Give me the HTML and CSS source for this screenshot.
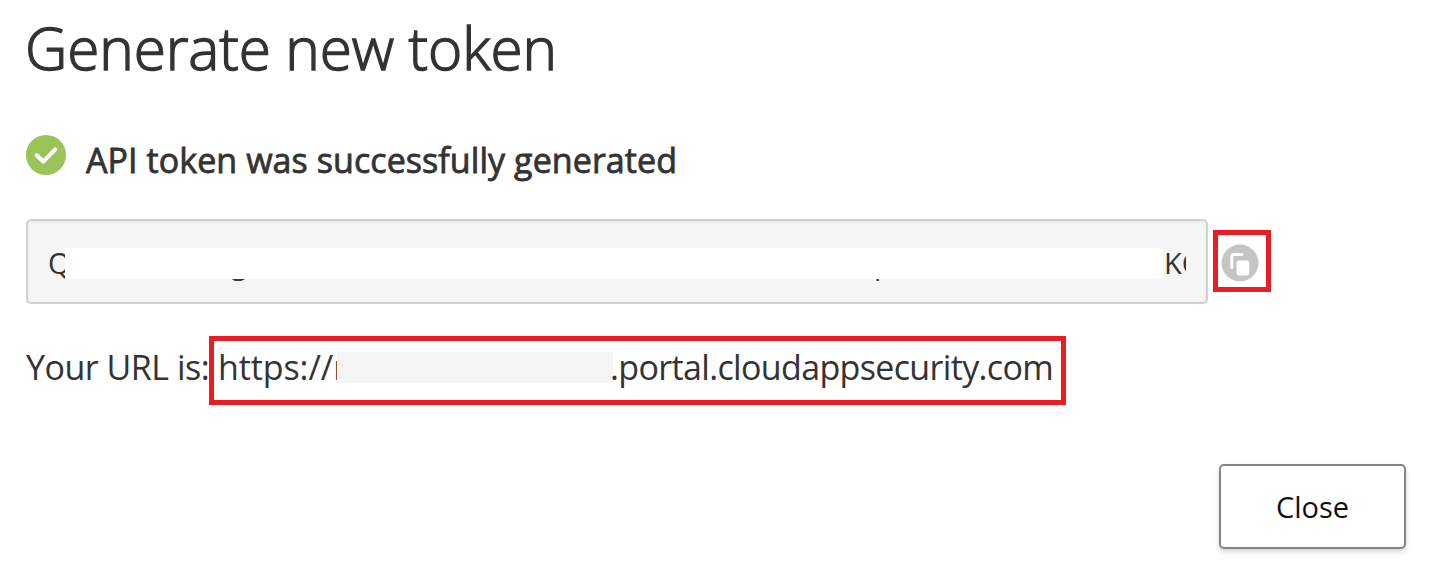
FILE: index.html
```html
<!DOCTYPE html>
<html lang="en">
<head>
<meta charset="utf-8">
<title>Generate new token</title>
<link rel="stylesheet" href="styles.css">
</head>
<body>
<main class="dialog">
  <h1 class="title"><span>Generate new token</span></h1>
  <div class="status">
    <svg class="check" width="40" height="40" viewBox="0 0 40 40"><circle cx="20" cy="20" r="20" fill="#9ac457"/><path d="M10.8 20.2l6.4 6.4 12-12.2" fill="none" stroke="#fff" stroke-width="4.2" stroke-linecap="round" stroke-linejoin="round"/></svg>
    <span class="status-text">API token was successfully generated</span>
  </div>
  <div class="token-row">
    <div class="token">
      <div class="token-value"><span class="start">Q</span><span class="mid">g</span><span class="late">p</span><span class="end">KC</span></div>
      <div class="token-mask"></div>
    </div>
    <div class="copy">
      <svg width="38" height="38" viewBox="0 0 38 38"><circle cx="19" cy="19" r="18.5" fill="#c5c5c5"/><path d="M10.8 23.5V13q0-2.5 2.5-2.5H21" fill="none" stroke="#fff" stroke-width="3" stroke-linecap="round"/><rect x="15.6" y="16.4" width="12.6" height="15" rx="2.5" fill="#fff"/></svg>
    </div>
  </div>
  <div class="url-row">
    <span class="url-label">Your URL is:</span>
    <div class="url-box"><span class="scheme">https://n</span><span class="url-mask"></span><span class="host">.portal.cloudappsecurity.com</span></div>
  </div>
  <div class="footer"><button class="close">Close</button></div>
</main>
</body>
</html>
```
FILE: styles.css
```css
* { box-sizing: border-box; }
body { margin: 0; background: #fff; color: #333; font-family: "Open Sans", "Noto Sans", sans-serif; }
.dialog { height: 564px; padding: 17px 28px 0 26px; display: flex; flex-direction: column; overflow: hidden; }
.title { margin: 0 0 0 -1px; height: 60px; font-size: 58.5px; line-height: 60px; font-weight: 300; white-space: nowrap; letter-spacing: -.1px; word-spacing: -.5px; -webkit-text-stroke: 1.4px #333; }
.status { display: flex; align-items: flex-start; height: 50px; margin-top: 58px; }
.check { flex: none; }
.status-text { margin-left: 20px; font-size: 34px; line-height: 50px; font-weight: 400; letter-spacing: .07px; -webkit-text-stroke: .8px #333; white-space: nowrap; }
.token-row { display: flex; align-items: flex-start; height: 85px; margin-top: 34px; }
.token { position: relative; width: 1182px; height: 85px; padding: 0 20px; border: 2px solid #d0d0d0; border-radius: 5px; background: #f5f5f5; box-shadow: inset 0 2px 3px #ececec; }
.token-value { display: flex; height: 81px; overflow: hidden; font-size: 29px; line-height: 83px; white-space: nowrap; }
.start { width: 183px; }
.mid { width: 643px; }
.late { width: 290px; }
.end { width: 22px; overflow: hidden; }
.token-mask { position: absolute; left: 37px; top: 27px; width: 1098px; height: 31px; background: #fff; }
.copy { display: flex; align-items: center; justify-content: center; width: 58px; height: 62px; margin: 11px 0 0 5px; padding: 3px 5px 0 0; border: 5px solid #e81e25; }
.copy svg { flex: none; }
.url-row { display: flex; height: 69px; margin-top: 32px; font-size: 34px; white-space: nowrap; }
.url-label { width: 183px; line-height: 62px; letter-spacing: -.5px; }
.url-box { display: flex; width: 857px; height: 69px; padding-left: 4px; border: 5px solid #e81e25; line-height: 52px; }
.scheme { flex: none; width: 119px; overflow: hidden; letter-spacing: -.1px; }
.url-mask { flex: none; width: 276px; height: 31px; margin-top: 11px; background: #f5f5f5; }
.host { margin-left: -3px; letter-spacing: -.65px; }
.footer { display: flex; justify-content: flex-end; margin-top: 59px; }
.close { width: 187px; height: 85px; padding: 0; border: 2px solid #858585; border-radius: 5px; background: #fff; color: #111; box-shadow: 0 3px 5px rgba(0,0,0,.16); font: 29px/81px "Open Sans", "Noto Sans", sans-serif; }
```
